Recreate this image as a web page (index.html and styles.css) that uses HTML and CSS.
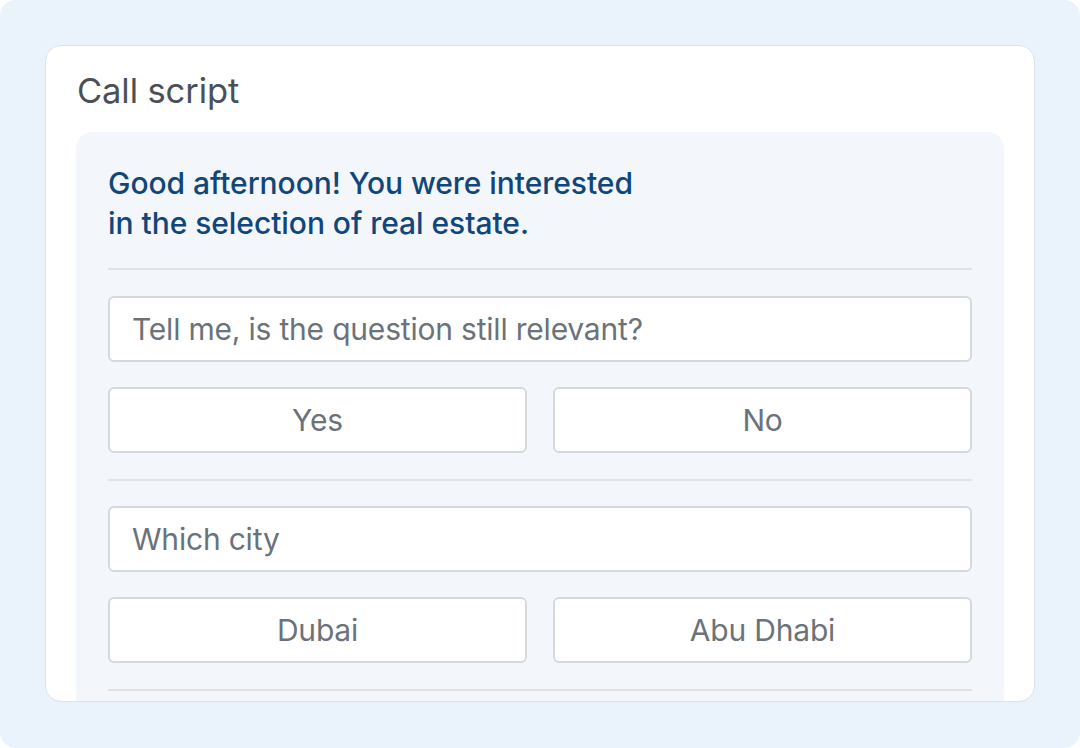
FILE: index.html
```html
<!DOCTYPE html>
<html lang="en">
<head>
<meta charset="utf-8">
<title>Call script</title>
<link rel="stylesheet" href="styles.css">
</head>
<body>
<div class="frame">
  <section class="card">
    <h1 class="card-title">Call script</h1>
    <div class="panel">
      <p class="greeting">Good afternoon! You were interested<br>in the selection of real estate.</p>
      <hr class="divider">
      <div class="question">Tell me, is the question still relevant?</div>
      <div class="answers">
        <button class="answer">Yes</button>
        <button class="answer">No</button>
      </div>
      <hr class="divider">
      <div class="question">Which city</div>
      <div class="answers">
        <button class="answer">Dubai</button>
        <button class="answer">Abu Dhabi</button>
      </div>
      <hr class="divider">
    </div>
  </section>
</div>
</body>
</html>
```

FILE: styles.css
```css
* { box-sizing: border-box; }
html, body { margin: 0; padding: 0; background: #ffffff; }
body { font-family: Inter, "Noto Sans", sans-serif; }

.frame {
  width: 1080px;
  height: 748px;
  background: #EAF2FC;
  border-radius: 16px;
  padding: 45px 45px 46px 45px;
}

.card {
  height: 657px;
  background: #ffffff;
  border: 1.5px solid #DDE2E8;
  border-radius: 16px;
  overflow: hidden;
  padding: 0 30px;
}

.card-title {
  margin: 0;
  padding: 24px 0 0 1px;
  height: 86px;
  font-size: 34.5px;
  line-height: 42px;
  font-weight: 400;
  color: #4A5058;
  letter-spacing: -0.1px;
}

.panel {
  background: #F3F7FB;
  border-radius: 16px 16px 0 0;
  padding: 31px 32px 0 32px;
  display: flex;
  flex-direction: column;
  gap: 25.4px;
  height: 600px;
}

.greeting {
  margin: 0;
  font-size: 30px;
  line-height: 40px;
  color: #11467A;
  font-weight: 500;
  letter-spacing: -0.05px;
}

.divider {
  margin: 0;
  border: 0;
  height: 2px;
  background: #DFE3E8;
  flex: none;
}

.question {
  height: 66px;
  flex: none;
  background: #ffffff;
  border: 2px solid #D4D9DF;
  border-radius: 6px;
  padding: 0 22px;
  display: flex;
  align-items: center;
  font-size: 30px;
  color: #6B727A;
  letter-spacing: -0.2px;
}

.answers {
  display: grid;
  grid-template-columns: 1fr 1fr;
  gap: 26px;
  flex: none;
}

.answer {
  height: 66px;
  background: #ffffff;
  border: 2px solid #D4D9DF;
  border-radius: 6px;
  font-family: inherit;
  font-size: 30px;
  color: #6B727A;
  letter-spacing: -0.2px;
  padding: 0;
}
```
